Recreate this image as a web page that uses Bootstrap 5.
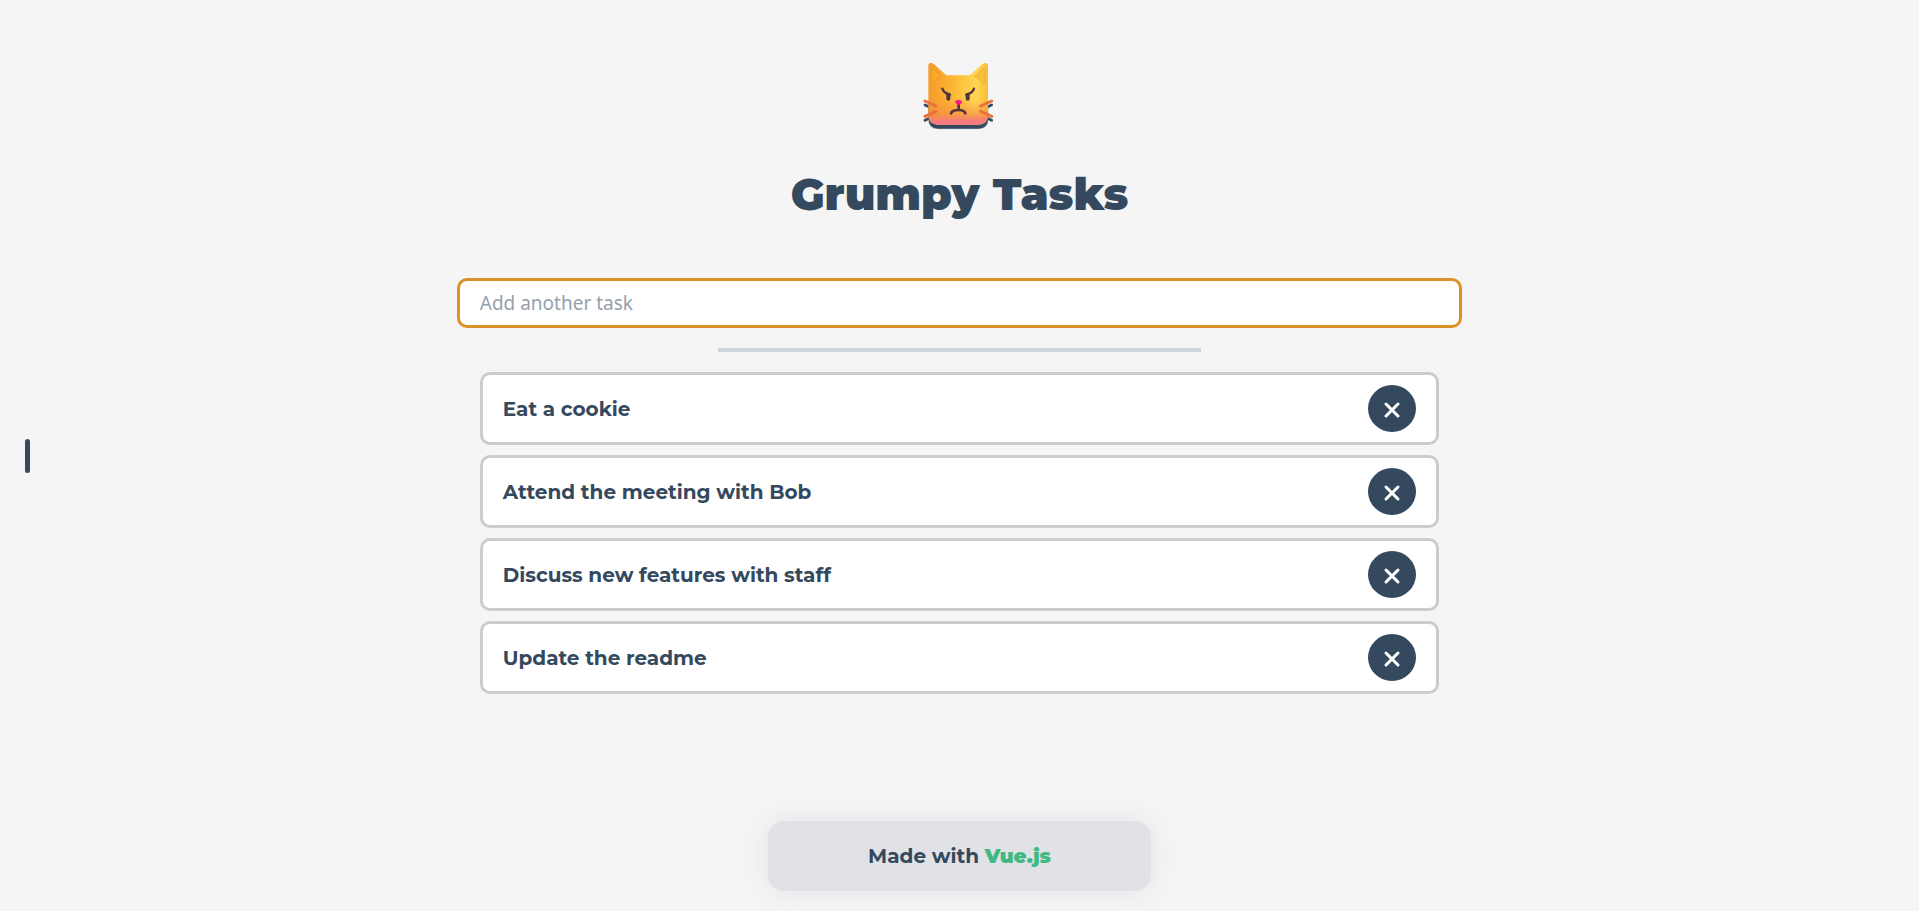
<!DOCTYPE html>
<html lang="en">
<head>
<meta charset="utf-8">
<meta name="viewport" content="width=device-width, initial-scale=1">
<title>Grumpy Tasks</title>
<link href="https://cdn.jsdelivr.net/npm/bootstrap@5.3.0/dist/css/bootstrap.min.css" rel="stylesheet">
<style>
  :root { --ink: #34495e; }
  body { background: #f5f5f5; color: var(--ink); font-family: Montserrat, Inter, sans-serif; }
  .page-shell { padding: 50px 0 20px; }
  .cat-logo { width: 100px; height: 90px; }
  .page-title { font-size: 44px; line-height: 60px; font-weight: 900; color: var(--ink); margin: 24px 0 54px; }
  .task-form { width: calc(50% + 46px); }
  .task-input { height: 50px; padding: 0 20px; border: 3px solid #dc922b; border-radius: 10px; font: 19px "Noto Sans", sans-serif; color: var(--ink); }
  .task-input:focus { border-color: #dc922b; box-shadow: none; color: var(--ink); }
  .task-input::placeholder { color: #95a0ac; }
  .divider { width: calc(25% + 4px); height: 4px; background: #cfd4d8; border: 0; opacity: 1; margin: 20px 0; }
  .task-list { width: 50%; gap: 10px; }
  .task-item { height: 73px; padding: 0 20px; background: #fff; border: 3px solid #ccc; border-radius: 10px; font-size: 20px; font-weight: 700; }
  .delete-btn { width: 48px; height: 47px; background: var(--ink); }
  .made-with { width: 20%; min-width: 260px; height: 70px; border-radius: 16px; background: #e1e2e6; font-size: 20px; font-weight: 700; box-shadow: 0 0 30px rgba(52, 73, 94, .1); }
  .made-with a { color: #42b983; font-weight: 900; }
  .menu-handle { left: 25px; width: 5px; height: 34px; border-radius: 3px; background: var(--ink); }
</style>
</head>
<body>
<button type="button" class="menu-handle position-fixed top-50 translate-middle-y border-0 p-0" aria-label="Open menu"></button>

<div class="page-shell d-flex flex-column align-items-center min-vh-100">
  <header class="d-flex flex-column align-items-center text-center">
    <svg class="cat-logo" viewBox="0 0 300 270" aria-hidden="true">
      <defs>
        <linearGradient id="fur" x1="0" y1="0" x2="1" y2="0">
          <stop offset="0" stop-color="#f39a2c"/><stop offset=".35" stop-color="#fbb232"/><stop offset=".8" stop-color="#ffd552"/><stop offset="1" stop-color="#f9bd38"/>
        </linearGradient>
        <linearGradient id="chin" x1="0" y1="0" x2="0" y2="1">
          <stop offset=".6" stop-color="#f58a4c" stop-opacity="0"/><stop offset=".82" stop-color="#f58a45" stop-opacity=".6"/><stop offset=".93" stop-color="#f77c78"/><stop offset="1" stop-color="#f87a88"/>
        </linearGradient>
        <path id="head" d="M55 47Q55 37 65 39Q70 40 75 45L109 76H180L214 45Q219 40 225 39Q234 38 234 48V196Q234 224 205 224H84Q55 224 55 196Z"/>
        <path id="whiskers" d="M45 153L78 168M45 199L78 184M245 153L212 168M245 199L212 184"/>
      </defs>
      <g transform="translate(0 12)" fill="#34495e" stroke="#34495e">
        <path d="M56 150V196Q56 224 84 224H205Q234 224 234 196V150Z"/>
        <use href="#whiskers" stroke-width="8" stroke-linecap="round"/>
      </g>
      <use href="#head" fill="url(#fur)"/>
      <use href="#head" fill="url(#chin)"/>
      <path d="M66 59Q65 53 70 56L96 79Q79 86 68 98Q64 102 64 96Z" fill="#faaa27" stroke="#e79535" stroke-width="2"/>
      <path d="M223 59Q224 53 219 56L194 79Q210 87 221 102Q225 105 225 98Z" fill="#f8c03c" stroke="#e3a932" stroke-width="2"/>
      <g fill="none" stroke="#54343b" stroke-linecap="round" stroke-linejoin="round">
        <path d="M97 116Q101 129 120 134M192 116Q188 129 169 134" stroke-width="7"/>
        <path d="M115 135V146M173 135V146" stroke-width="12"/>
        <path d="M146 162V178M123 190Q127 180 146 180Q163 180 166 190" stroke-width="8"/>
      </g>
      <path d="M136 155Q137 151 146 151Q155 151 155 156Q154 162 146 165Q138 162 136 155Z" fill="#fa1783" stroke="#fa1783" stroke-width="2"/>
      <use href="#whiskers" fill="none" stroke="#e97038" stroke-width="9" stroke-linecap="round"/>
    </svg>
    <h1 class="page-title">Grumpy Tasks</h1>
  </header>

  <form class="task-form" onsubmit="return false">
    <label for="new-task" class="visually-hidden">Add another task</label>
    <input id="new-task" type="text" class="task-input form-control" placeholder="Add another task" autocomplete="off">
  </form>
  <hr class="divider">

  <ul class="task-list list-unstyled d-grid mb-5">
    <li class="task-item d-flex align-items-center justify-content-between"><span>Eat a cookie</span>
      <button type="button" class="delete-btn btn rounded-circle border-0 p-0" aria-label="Delete Eat a cookie"><svg width="48" height="47" class="d-block" aria-hidden="true"><path d="M18 19L30 31M30 19L18 31" stroke="#fff" stroke-width="3" stroke-linecap="round"/></svg></button></li>
    <li class="task-item d-flex align-items-center justify-content-between"><span>Attend the meeting with Bob</span>
      <button type="button" class="delete-btn btn rounded-circle border-0 p-0" aria-label="Delete Attend the meeting with Bob"><svg width="48" height="47" class="d-block" aria-hidden="true"><path d="M18 19L30 31M30 19L18 31" stroke="#fff" stroke-width="3" stroke-linecap="round"/></svg></button></li>
    <li class="task-item d-flex align-items-center justify-content-between"><span>Discuss new features with staff</span>
      <button type="button" class="delete-btn btn rounded-circle border-0 p-0" aria-label="Delete Discuss new features with staff"><svg width="48" height="47" class="d-block" aria-hidden="true"><path d="M18 19L30 31M30 19L18 31" stroke="#fff" stroke-width="3" stroke-linecap="round"/></svg></button></li>
    <li class="task-item d-flex align-items-center justify-content-between"><span>Update the readme</span>
      <button type="button" class="delete-btn btn rounded-circle border-0 p-0" aria-label="Delete Update the readme"><svg width="48" height="47" class="d-block" aria-hidden="true"><path d="M18 19L30 31M30 19L18 31" stroke="#fff" stroke-width="3" stroke-linecap="round"/></svg></button></li>
  </ul>

  <footer class="made-with d-flex align-items-center justify-content-center mt-auto">
    <span>Made with <a href="#" class="text-decoration-none">Vue.js</a></span>
  </footer>
</div>
<script src="https://cdn.jsdelivr.net/npm/bootstrap@5.3.0/dist/js/bootstrap.bundle.min.js"></script>
</body>
</html>
